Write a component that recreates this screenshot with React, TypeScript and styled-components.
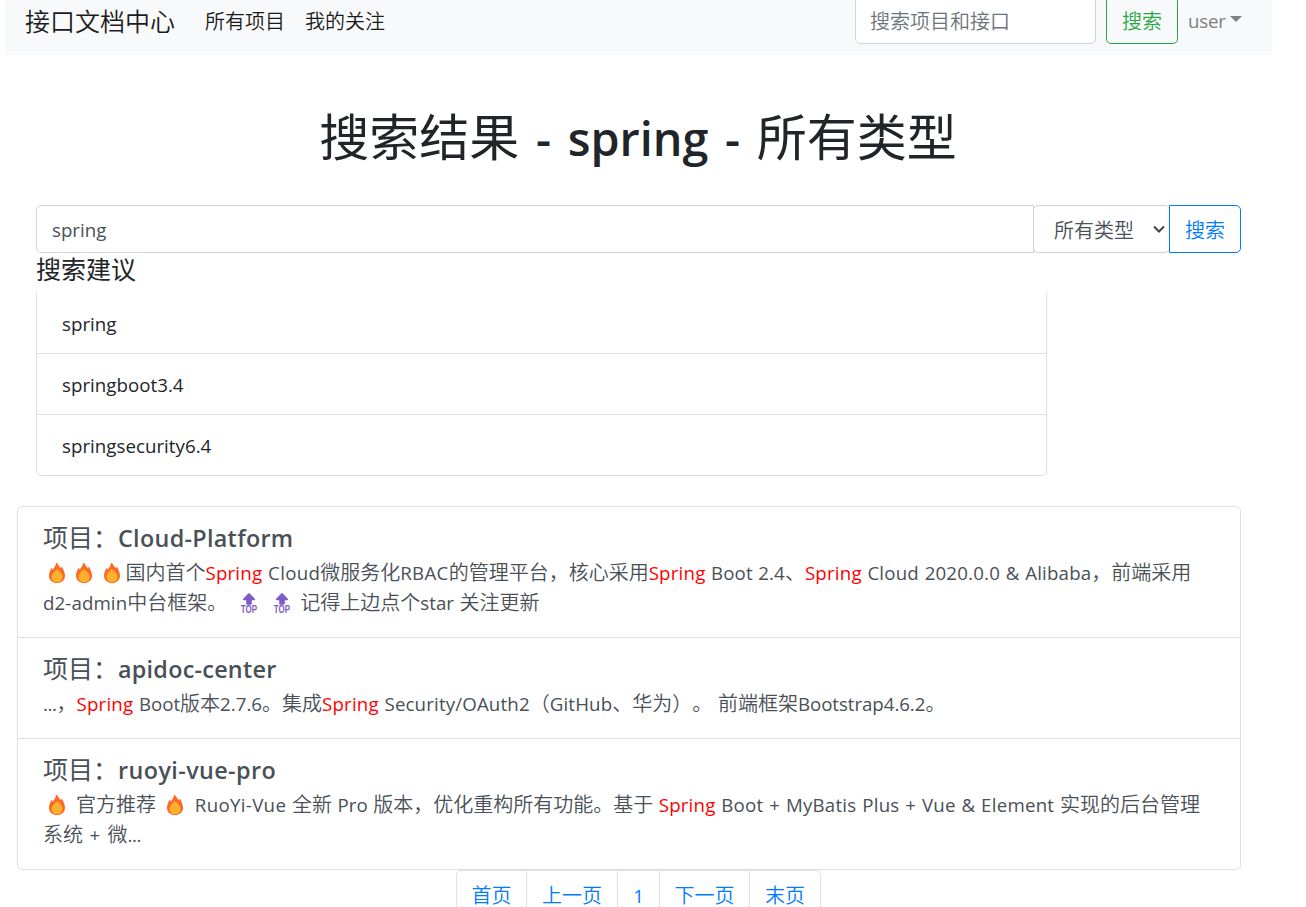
import React from 'react';
import styled, { createGlobalStyle } from 'styled-components';

const GlobalStyle = createGlobalStyle`
  *, *::before, *::after { box-sizing: border-box; }
  html, body { margin: 0; padding: 0; background: #fff; }
  body {
    font-family: "Noto Sans CJK SC", "Open Sans", sans-serif;
    font-size: 20px;
    font-weight: 350;
    line-height: 30px;
    color: #212529;
    text-spacing-trim: space-all;
  }
  h1, h5, p, ul { margin: 0; padding: 0; }
`;

const Page = styled.div`
  width: 1306px;
  height: 907px;
  overflow: hidden;
`;

const Latin = styled.span<{ $strong?: boolean; $track: number }>`
  font-family: "Open Sans", "Noto Sans", sans-serif;
  font-size: 0.935em;
  font-weight: ${p => (p.$strong ? 600 : 400)};
  letter-spacing: ${p => p.$track}px;
  line-height: 1;
  white-space: pre-wrap;
`;

/* Sets Latin runs and Chinese runs in their own faces. */
function Mixed({ text, strong, track = 0 }: { text: string; strong?: boolean; track?: number }) {
  return (
    <>
      {text.split(/([\x20-\x7e]+)/).map((run, i) =>
        i % 2 ? <Latin key={i} $strong={strong} $track={track}>{run}</Latin> : run
      )}
    </>
  );
}

const Navbar = styled.nav`
  display: flex;
  align-items: flex-end;
  width: 1267px;
  height: 55px;
  margin-left: 5px;
  padding: 0 30px 11px 20px;
  background: #f8f9fa;
  overflow: hidden;
`;

const Brand = styled.a`
  margin-right: 30px;
  padding-bottom: 2px;
  font-size: 25px;
  line-height: 44px;
  color: #1a1b1c;
`;

const NavLink = styled.a`
  margin-right: 20px;
  padding-bottom: 1px;
  line-height: 44px;
  color: #1a1b1c;
`;

const NavForm = styled.form`
  display: flex;
  gap: 10px;
  margin-left: auto;
`;

const TextField = styled.div<{ $placeholder?: boolean }>`
  display: flex;
  align-items: center;
  height: 48px;
  padding: 2px 15px 0;
  border: 1px solid #ced4da;
  border-radius: 5px;
  background: #fff;
  color: ${p => (p.$placeholder ? '#6c757d' : '#495057')};
`;

const NavField = styled(TextField)`
  width: 241px;
  padding-left: 14px;
`;

const OutlineButton = styled.button<{ $color: string }>`
  width: 72px;
  height: 48px;
  padding: 2px 0 0;
  border: 1px solid ${p => p.$color};
  border-radius: 5px;
  background: transparent;
  color: ${p => p.$color};
  font: inherit;
`;

const UserMenu = styled.a`
  display: flex;
  align-items: center;
  width: 54px;
  justify-content: space-between;
  height: 48px;
  margin-left: 10px;
  color: #7f8081;
`;

const Caret = styled.span`
  margin-top: -3px;
  border: 6px solid transparent;
  border-top-color: #7f8081;
  border-bottom: 0;
`;

const Title = styled.h1`
  width: 1276px;
  margin-top: 49px;
  font-size: 50px;
  font-weight: 400;
  line-height: 60px;
  text-align: center;
  word-spacing: 4.5px;
`;

const SearchRow = styled.form`
  display: flex;
  width: 1205px;
  margin: 41px 0 0 36px;
`;

const QueryField = styled(TextField)`
  flex: 1;
  border-radius: 5px 0 0 5px;
`;

const TypeSelect = styled(TextField)`
  width: 137px;
  margin: 0 -1px;
  padding: 2px 3px 0 20px;
  justify-content: space-between;
  background: transparent;
`;

const SubmitButton = styled(OutlineButton)`
  border-radius: 0 5px 5px 0;
  background: #fff;
`;

const SuggestTitle = styled.h5`
  margin: 0 0 10px 36px;
  font-size: 25px;
  font-weight: 400;
  line-height: 30px;
`;

const SuggestList = styled.ul`
  width: 1011px;
  margin-left: 36px;
  border: 1px solid #dfdfdf;
  border-top: 0;
  border-radius: 0 0 5px 5px;
  list-style: none;
`;

const SuggestItem = styled.li`
  height: 61px;
  padding: 15px 25px 0;
  border-bottom: 1px solid #dfdfdf;

  &:last-child {
    height: 60px;
    border-bottom: 0;
  }
`;

const ResultList = styled.div`
  width: 1224px;
  margin: 30px 0 0 17px;
  border: 1px solid #dfdfdf;
  border-radius: 5px;
`;

const ResultItem = styled.article`
  padding: 14px 25px 20px;
  border-bottom: 1px solid #dfdfdf;
  color: #495057;

  &:last-child { border-bottom: 0; }
`;

const ResultTitle = styled.h5`
  margin-bottom: 6px;
  font-size: 25px;
  font-weight: 400;
  line-height: 30px;
`;

const Line = styled.p`
  height: 30px;
  white-space: nowrap;
  word-spacing: 0.65px;
`;

const Mark = styled.span`
  color: #f00;
`;

const Pagination = styled.ul`
  display: flex;
  width: 365px;
  margin-left: 456px;
  border: 1px solid #dee2e6;
  border-radius: 5px;
  list-style: none;
`;

const PageItem = styled.li<{ $width: number }>`
  width: ${p => p.$width}px;
  height: 48px;
  line-height: 48px;
  text-align: center;
  color: #007bff;
  border-right: 1px solid #dee2e6;

  &:last-child { border-right: 0; }
`;

const Emoji = styled.svg<{ $before: number; $after: number }>`
  display: inline-block;
  width: 16px;
  height: 20px;
  margin: 0 ${p => p.$after}px 0 ${p => p.$before}px;
  vertical-align: -3px;
  overflow: visible;
`;

function Fire() {
  return (
    <Emoji viewBox="0 0 16 20" $before={5.7} $after={5.8}>
      <path fill="#ff6723" d="M7.2 0.2C7.9-.1 8.3.3 8.7 1c.9 1.7 2.4 3.4 3.3 4.5.3-.5.2-1.2.5-1.6.3-.3.7 0 .9.5C14.3 6.6 16 9.3 16 12.7 16 17 12.6 20 8 20S0 17 0 12.7C0 9.3 1.4 7.2 2.4 5.2c.3-.5.8-.3.9.2.1.5.1 1 .4 1.3C5.2 5 6.7 2.5 6.9.8c0-.3.1-.5.3-.6Z" />
      <path fill="#ffb02e" d="M7.8 6.2c2.8 1.9 5.8 4.1 5.8 7.9 0 3.1-2.3 5.2-5.5 5.2s-5.6-2.1-5.6-5.3C2.5 10.5 5.6 8.4 7.1 6.4c.2-.3.4-.4.7-.2Z" />
    </Emoji>
  );
}

function TopArrow({ before, after }: { before: number; after: number }) {
  return (
    <Emoji viewBox="0 0 16 20" $before={before} $after={after}>
      <path fill="#7e5bc9" d="M7.2 .5q.8-.8 1.6 0L13.8 5.7q1 1.3-.5 1.6H10.8v3.5q0 .9-.9.9H6.1q-.9 0-.9-.9V7.3H2.7Q1.2 7 2.2 5.7Z" />
      <text transform="translate(8 20) scale(0.8 1)" textAnchor="middle" fontFamily="Liberation Sans" fontWeight="700" fontSize="10" fill="#7e5bc9">TOP</text>
    </Emoji>
  );
}

function Chevron() {
  return (
    <svg width="14" height="10" viewBox="0 0 14 10" fill="none" stroke="#3c4248" strokeWidth="2">
      <path d="M2 1.5 7 6.5 12 1.5" />
    </svg>
  );
}

const Spring = () => <Mark><Mixed track={0.2} text="Spring" /></Mark>;

const suggestions = ['spring', 'springboot3.4', 'springsecurity6.4'];
const pages: [string, number][] = [['首页', 70], ['上一页', 91], ['1', 42], ['下一页', 90], ['末页', 70]];

export default function App() {
  return (
    <Page>
      <GlobalStyle />
      <Navbar>
        <Brand>接口文档中心</Brand>
        <NavLink>所有项目</NavLink>
        <NavLink>我的关注</NavLink>
        <NavForm>
          <NavField $placeholder>搜索项目和接口</NavField>
          <OutlineButton type="button" $color="#28a745">搜索</OutlineButton>
        </NavForm>
        <UserMenu><span><Mixed track={-0.2} text="user" /></span><Caret /></UserMenu>
      </Navbar>

      <Title><Mixed strong text="搜索结果 - spring - 所有类型" /></Title>

      <SearchRow>
        <QueryField><Mixed text="spring" /></QueryField>
        <TypeSelect>所有类型<Chevron /></TypeSelect>
        <SubmitButton type="button" $color="#007bff">搜索</SubmitButton>
      </SearchRow>

      <SuggestTitle>搜索建议</SuggestTitle>
      <SuggestList>
        {suggestions.map(s => <SuggestItem key={s}><Mixed track={0.03} text={s} /></SuggestItem>)}
      </SuggestList>

      <ResultList>
        <ResultItem>
          <ResultTitle><Mixed strong track={0.3} text="项目：Cloud-Platform" /></ResultTitle>
          <Line>
            <Fire /><Fire /><Fire />
            国内首个<Spring /><Mixed track={0.3} text=" Cloud微服务化RBAC的管理平台，核心采用" /><Spring />
            <Mixed track={0.1} text=" Boot 2.4、" /><Spring /><Mixed track={0.18} text=" Cloud 2020.0.0 & Alibaba，前端采用" />
          </Line>
          <Line>
            <Mixed track={0.1} text="d2-admin中台框架。 " /><TopArrow before={8} after={9} /><TopArrow before={8} after={5} />
            <Mixed text=" 记得上边点个star 关注更新" />
          </Line>
        </ResultItem>
        <ResultItem>
          <ResultTitle><Mixed strong track={0.25} text="项目：apidoc-center" /></ResultTitle>
          <Line>
            <Mixed track={-0.4} text="...，" /><Spring /><Mixed text=" Boot版本2.7.6。集成" /><Spring />
            <Mixed track={0.15} text=" Security/OAuth2（GitHub、华为）。 前端框架" /><Mixed track={-0.05} text="Bootstrap4.6.2。" />
          </Line>
        </ResultItem>
        <ResultItem>
          <ResultTitle><Mixed strong track={0.4} text="项目：ruoyi-vue-pro" /></ResultTitle>
          <Line>
            <Fire /><Mixed text=" 官方推荐 " /><Fire />
            <Mixed track={0.32} text=" RuoYi-Vue 全新" /><Mixed text=" Pro 版本，优化重构所有功能。基于 " /><Spring />
            <Mixed track={0.24} text=" Boot + MyBatis Plus + Vue & Element 实现的后台管理" />
          </Line>
          <Line><Mixed track={0.9} text="系统 + " /><Mixed track={-0.4} text="微..." /></Line>
        </ResultItem>
      </ResultList>

      <Pagination>
        {pages.map(([label, width]) => (
          <PageItem key={label} $width={width}><Mixed text={label} /></PageItem>
        ))}
      </Pagination>
    </Page>
  );
}
